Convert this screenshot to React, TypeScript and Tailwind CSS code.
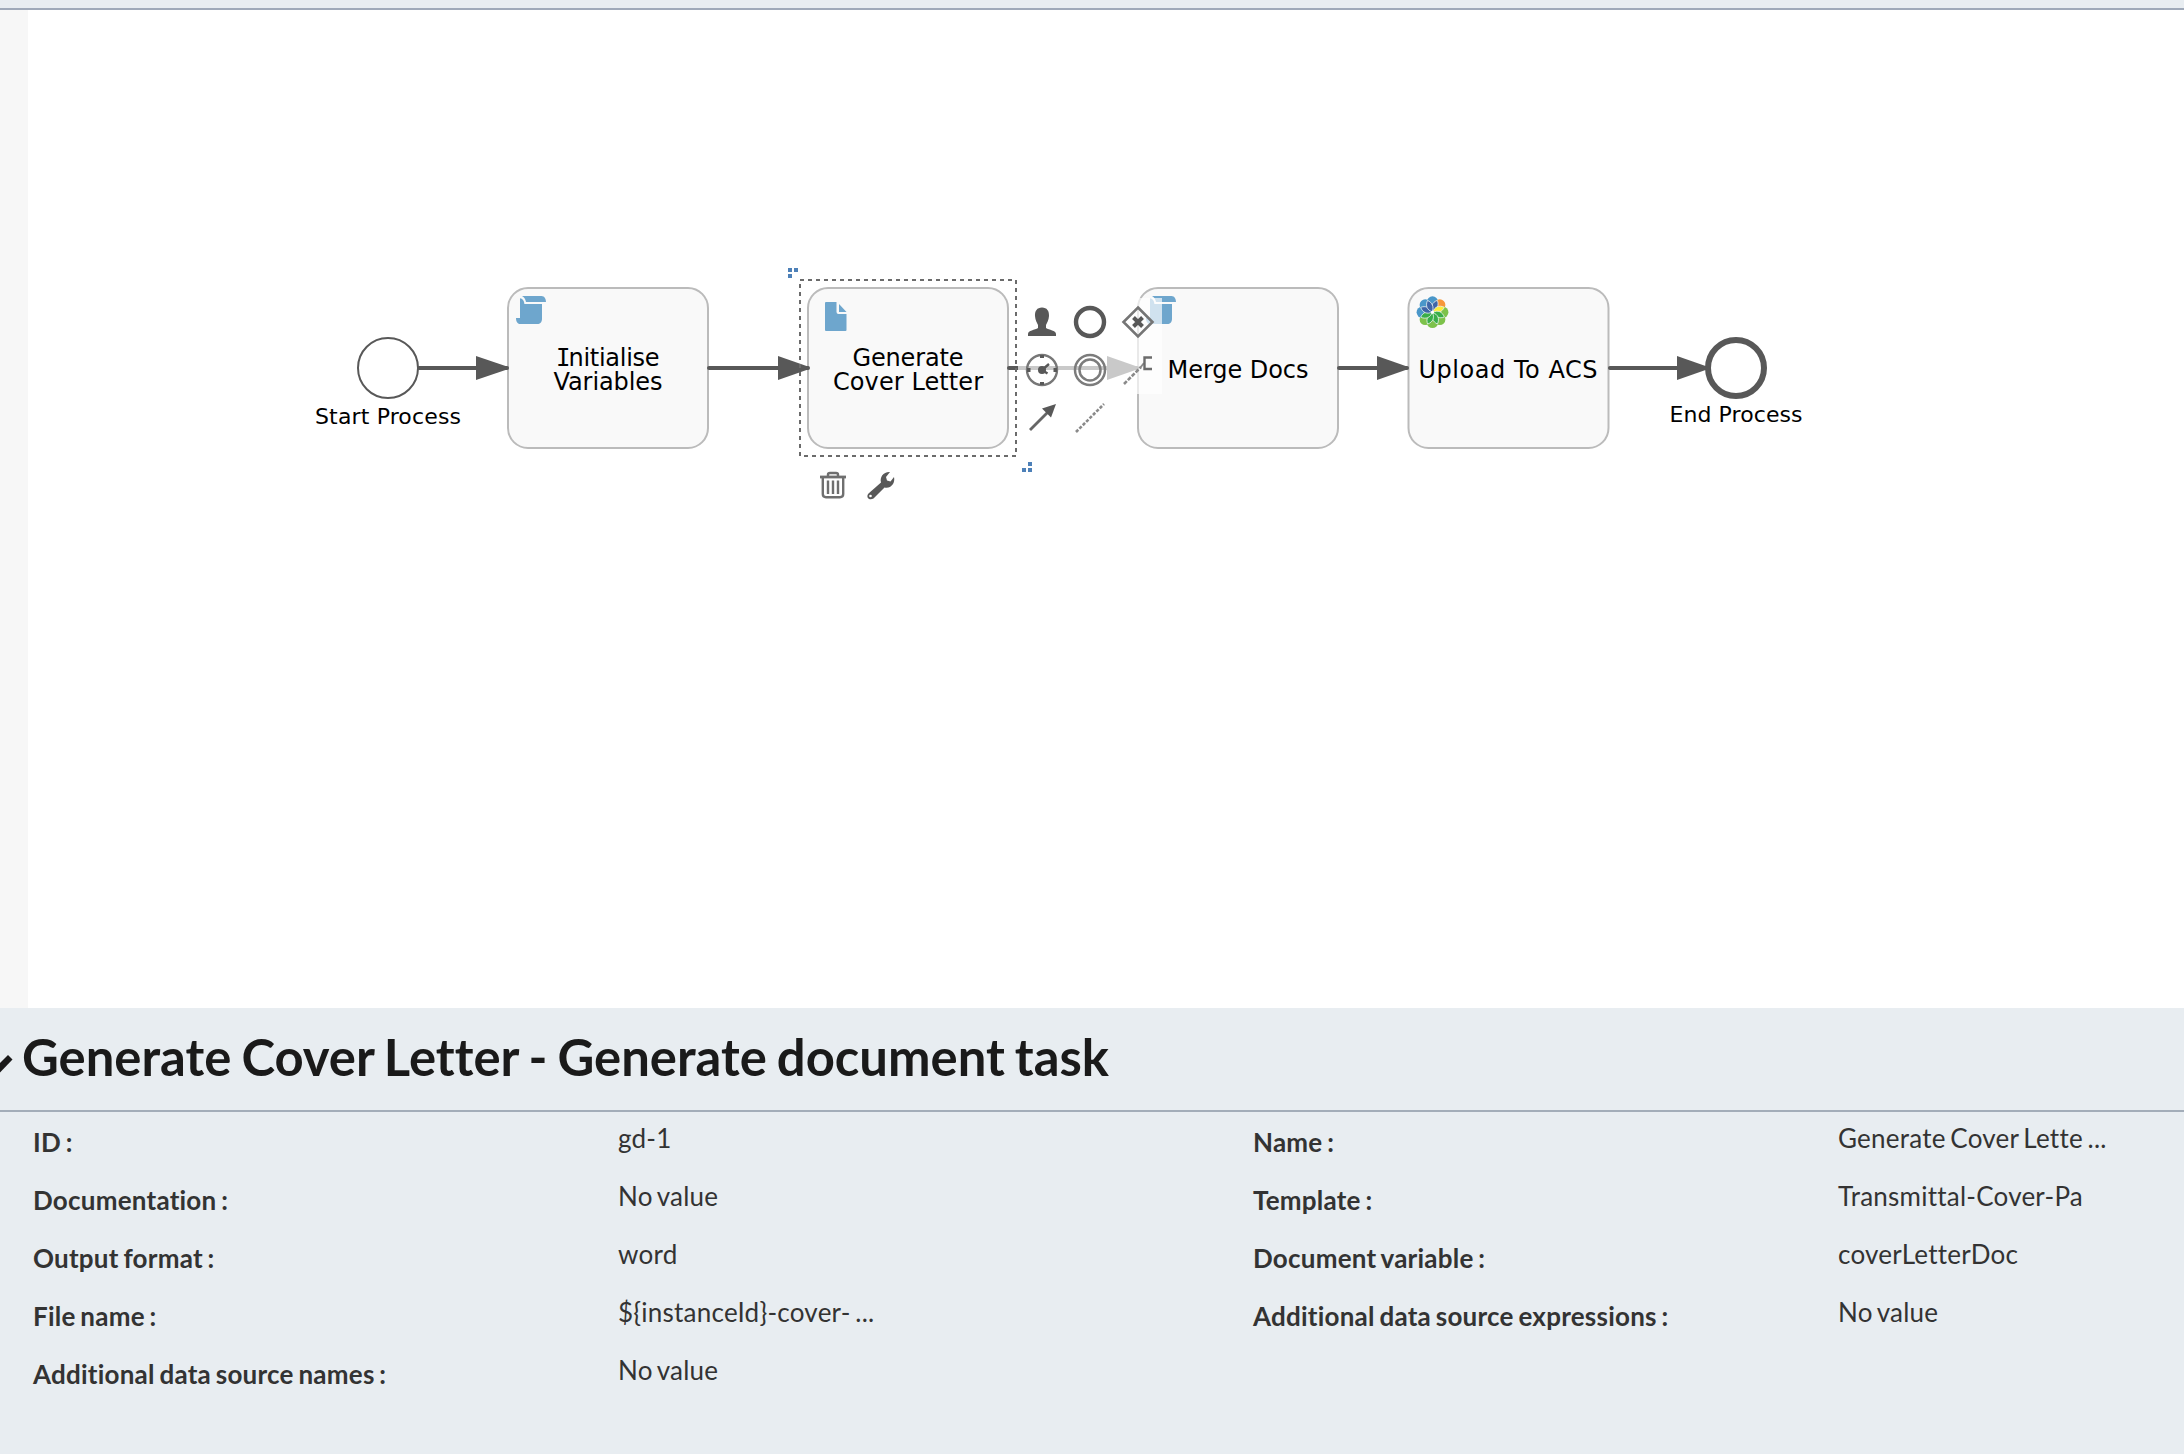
import React from "react";

const INK = "#585858";
const LABEL_FONT = '"DejaVu Sans", Verdana, sans-serif';

function Task({ x }: { x: number }) {
  return <rect x={x} y={288} width={200} height={160} rx={20} fill="#f9f9f9" stroke="#bbbbbb" strokeWidth={2} />;
}

function Flow({ from, head, to }: { from: number; head: number; to: number }) {
  return (
    <g fill={INK} stroke="none">
      <line x1={from} y1={368} x2={to} y2={368} stroke={INK} strokeWidth={4} strokeLinecap="round" />
      <polygon points={`${head},356 ${to},366.4 ${to + 1},368 ${to},369.6 ${head},380`} />
    </g>
  );
}

type LabelProps = { x: number; y: number; width: number; size?: number; children: React.ReactNode };

function Label({ x, y, width, size = 24, children }: LabelProps) {
  return (
    <text x={x} y={y} textLength={width} fontSize={size} fontFamily={LABEL_FONT} fill="#000">
      {children}
    </text>
  );
}

function ScriptIcon({ x }: { x: number }) {
  return (
    <g transform={`translate(${x} 296)`} fill="#6ea6cd">
      <path d="M6 0H25.500C28.500 0 30 3 30 6H10C9.500 3 8 1 6 0Z" />
      <path d="M4 2.200C6.500 2.600 8.200 4.500 8.400 8H26V23C26 26 24 28 21.500 28H4C1.500 28 0 25.500 0 22H4Z" />
    </g>
  );
}

function DocumentIcon() {
  return (
    <g fill="#6ea6cd">
      <path d="M826 302H836.500V312Q836.500 314 838.500 314H846.500V330Q846.500 331 845.500 331H826Q825 331 825 330V303Q825 302 826 302Z" />
      <path d="M839 304L846.500 312H839Z" />
    </g>
  );
}

const PETALS = [
  { angle: 0, outer: "#4a97c9", inner: "#3f66a8" },
  { angle: 45, outer: "#f7973a", inner: "#fdee3b" },
  { angle: 90, outer: "#7dc24b", inner: "#3aae49" },
  { angle: 135, outer: "#7dc24b", inner: "#3aae49" },
  { angle: 180, outer: "#7dc24b", inner: "#3aae49" },
  { angle: 225, outer: "#7dc24b", inner: "#3aae49" },
  { angle: 270, outer: "#4a97c9", inner: "#3f66a8" },
  { angle: 315, outer: "#4a97c9", inner: "#3f66a8" },
];

function FlowerIcon() {
  return (
    <g transform="translate(1432.500 312.200)">
      {PETALS.map((p) => (
        <g key={p.angle} transform={`rotate(${p.angle})`}>
          <circle cy={-10.300} r={5.600} fill={p.outer} />
          <path fill={p.outer} d="M0 0L-5 -8L5 -8Z" />
        </g>
      ))}
      {PETALS.map((p) => (
        <path
          key={p.angle}
          transform={`rotate(${p.angle + 20})`}
          fill={p.inner}
          stroke="#eef5f2"
          strokeWidth={0.700}
          d="M0 -0.500C-4 -4 -4 -9 0.500 -12.800C3.800 -9 3.800 -4 0 -0.500Z"
        />
      ))}
      <circle r={1.500} fill="#fff" />
    </g>
  );
}

function ContextPad() {
  return (
    <g fill="none" stroke={INK}>
      <path d="M1018 298H1162V394H1114V442H1018Z" fill="#fff" fillOpacity={0.680} stroke="none" />
      <path
        d="M1042 307.500C1047 307.500 1049.300 311 1049 316C1048.800 320 1047 323 1046 325V328C1049 330 1056 330.500 1056 334V336H1028V334C1028 330.500 1035 330 1038 328V325C1037 323 1035.200 320 1035 316C1034.700 311 1037 307.500 1042 307.500Z"
        fill={INK}
        stroke="none"
      />
      <circle cx={1090} cy={322} r={14} strokeWidth={4.400} />
      <path d="M1138 307.500L1152.500 322L1138 336.500L1123.500 322Z" strokeWidth={2.600} stroke="#757575" />
      <path d="M1133.500 317.500L1142.500 326.500M1142.500 317.500L1133.500 326.500" strokeWidth={4} />
      <circle cx={1042} cy={370} r={15} strokeWidth={2.400} stroke="#777" />
      <path d="M1042 355V358M1042 382V385M1027 370H1030.500M1053.500 370H1057" strokeWidth={4} />
      <path d="M1042 370L1049 364M1042 370L1047.500 373.500" strokeWidth={2.400} />
      <circle cx={1042} cy={370} r={4} fill={INK} stroke="none" />
      <g stroke="#7c7c7c">
        <circle cx={1090} cy={370} r={15} strokeWidth={2.500} />
        <circle cx={1090} cy={370} r={10.500} strokeWidth={2.500} />
      </g>
      <path d="M1124 384L1141 367" strokeWidth={2.600} strokeDasharray="4 1.500" stroke="#8a8a8a" />
      <path d="M1140 368L1144 363" strokeWidth={2} stroke="#8a8a8a" />
      <path d="M1152 357.500H1144.500V369H1152" strokeWidth={2.400} stroke="#6c6c6c" />
      <path d="M1030 430L1048 412" strokeWidth={2.800} stroke="#666" />
      <path d="M1056 404L1042 408.500L1051 417.500Z" fill={INK} stroke="none" />
      <path d="M1076 432L1104 404" strokeWidth={2.600} strokeDasharray="3.200 1.600" stroke="#8a8a8a" />
    </g>
  );
}

function TrashIcon() {
  return (
    <g fill="none" stroke="#6f6f6f" strokeWidth={2.400}>
      <path d="M820 477H846" strokeWidth={2.800} />
      <path d="M828 476V474.500Q828 473 830 473H836Q838 473 838 474.500V476" />
      <path d="M822.800 478V494Q822.800 497.200 826 497.200H840Q843.200 497.200 843.200 494V478" />
      <path d="M828 480.500V494M833 480.500V494M838 480.500V494" />
    </g>
  );
}

function WrenchIcon() {
  return (
    <g>
      <path
        d="M868.500 493.500L881 482.500C879.500 477 883.500 471.500 890 472L886 477L887 480.500L890.500 481.500L894 477C895.500 483.500 890.500 489 884.500 487.500L873.500 498.500C869 501 865.500 497 868.500 493.500Z"
        fill={INK}
      />
      <circle cx={870.500} cy={496} r={1.300} fill="#fff" />
    </g>
  );
}

function Grips() {
  return (
    <g fill="#4d80b8">
      <path d="M788 268h4v4h-4zM794 268h4v4h-4zM788 274h4v4h-4z" />
      <path d="M1028 462h4v4h-4zM1022 468h4v4h-4zM1028 468h4v4h-4z" />
    </g>
  );
}

function ProcessDiagram() {
  return (
    <svg width={2156} height={998} viewBox="28 10 2156 998" className="block shrink-0">
      <circle cx={388} cy={368} r={30} fill="#fff" stroke={INK} strokeWidth={2} />
      <Label x={315} y={424} width={146} size={22}>Start Process</Label>

      <Task x={508} />
      <ScriptIcon x={516} />
      <text x={556} y={365.500} fontSize={24} fontFamily='"DejaVu Sans Mono", monospace'>I</text>
      <Label x={568.500} y={365.500} width={91}>nitialise</Label>
      <Label x={553.500} y={389.500} width={109}>Variables</Label>

      <Task x={808} />
      <DocumentIcon />
      <Label x={852.500} y={365.500} width={111}>Generate</Label>
      <Label x={833} y={389.500} width={150}>Cover Letter</Label>

      <Task x={1138} />
      <ScriptIcon x={1146} />
      <Label x={1167.500} y={377.500} width={141}>Merge Docs</Label>

      <Task x={1408.500} />
      <FlowerIcon />
      <Label x={1418.500} y={377.500} width={179}>Upload To ACS</Label>

      <Flow from={419} head={476} to={507} />
      <Flow from={709} head={778} to={808} />
      <Flow from={1009} head={1107} to={1137} />
      <Flow from={1339} head={1377} to={1407} />
      <Flow from={1610} head={1677} to={1707} />

      <circle cx={1736} cy={368} r={28} fill="#fff" stroke={INK} strokeWidth={6} />
      <Label x={1669.500} y={422} width={133} size={22}>End Process</Label>

      <rect x={800} y={280} width={216} height={176} fill="none" stroke="#6b6b6b" strokeWidth={2} strokeDasharray="4 4" />
      <Grips />
      <ContextPad />
      <TrashIcon />
      <WrenchIcon />
    </svg>
  );
}

type Field = { label: string; value: string };

const LEFT: Field[] = [
  { label: "ID", value: "gd-1" },
  { label: "Documentation", value: "No value" },
  { label: "Output format", value: "word" },
  { label: "File name", value: "${instanceId}-cover- ..." },
  { label: "Additional data source names", value: "No value" },
];

const RIGHT: Field[] = [
  { label: "Name", value: "Generate Cover Lette ..." },
  { label: "Template", value: "Transmittal-Cover-Pa" },
  { label: "Document variable", value: "coverLetterDoc" },
  { label: "Additional data source expressions", value: "No value" },
];

function FieldColumn({ fields }: { fields: Field[] }) {
  return (
    <dl className="w-[1220px] shrink-0">
      {fields.map((f) => (
        <div key={f.label} className="flex h-[58px]">
          <dt className="w-[585px] shrink-0 pt-[14px] font-bold [word-spacing:-1.8px]">{f.label} :</dt>
          <dd className="pt-[10px] whitespace-nowrap [word-spacing:-2.2px]">{f.value}</dd>
        </div>
      ))}
    </dl>
  );
}

export default function App() {
  return (
    <div className="flex h-[1454px] w-[2184px] flex-col overflow-hidden bg-white font-['Lato',sans-serif] [font-variant-ligatures:none]">
      <div className="h-[10px] shrink-0 border-b-2 border-[#9fa9b9] bg-[#e8edf1]" />
      <main className="flex h-[998px] shrink-0">
        <div className="w-7 shrink-0 bg-[#f7f7f7]" />
        <ProcessDiagram />
      </main>
      <section className="flex-1 bg-[#e8edf1] text-[#333]">
        <header className="flex h-[104px] items-center border-b-2 border-[#a3adb9] text-[#1a1a1a]">
          <svg width={22} height={40} viewBox="0 0 22 40" className="shrink-0">
            <path d="M8 16L12.500 20.500L0 33.500V24Z" fill="#1a1a1a" />
          </svg>
          <h2 className="pb-[5px] text-[50.8px] leading-[60px] font-bold whitespace-nowrap [word-spacing:-2.3px]">
            Generate Cover Letter - Generate document task
          </h2>
        </header>
        <div className="flex pl-[33px] text-[26px] leading-[32px] tracking-[0.23px]">
          <FieldColumn fields={LEFT} />
          <FieldColumn fields={RIGHT} />
        </div>
      </section>
    </div>
  );
}
